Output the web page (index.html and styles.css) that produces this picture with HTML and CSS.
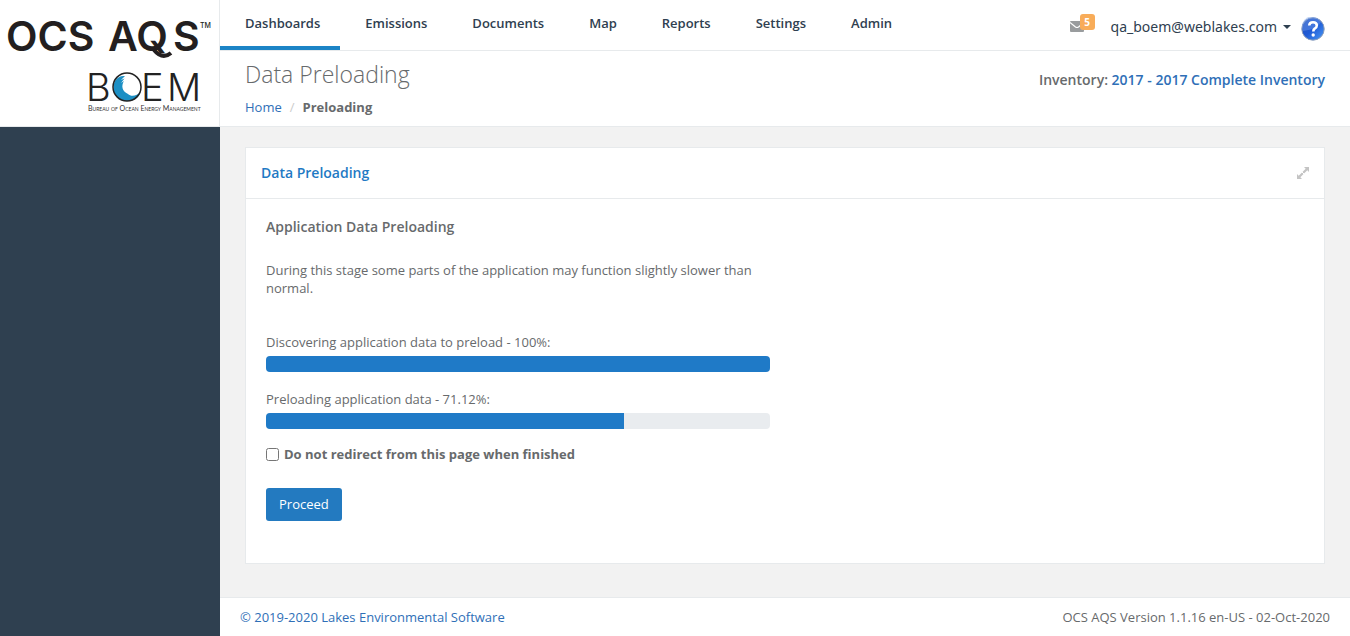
FILE: index.html
```html
<!DOCTYPE html>
<html lang="en">
<head>
<meta charset="utf-8">
<title>OCS AQS - Data Preloading</title>
<link rel="stylesheet" href="styles.css">
</head>
<body>
<div class="layout">
  <aside class="sidebar">
    <a class="brand" href="#" aria-label="OCS AQS home">
      <svg class="brand-logo" viewBox="0 0 219 126" role="img" aria-label="OCS AQS, BOEM">
        <g class="logo-title">
          <text x="6" y="51">OCS</text>
          <text x="108" y="51">AQ</text>
          <text x="173" y="51">S</text>
          <path d="M154 50C159 56 165 58 171 53" fill="none" stroke="#231f20" stroke-width="4"/>
        </g>
        <text class="logo-tm" x="200" y="28">TM</text>
        <g class="logo-boem">
          <text x="86" y="101">B</text>
          <text x="141" y="101">E</text>
          <text x="167" y="101">M</text>
        </g>
        <circle cx="127" cy="87" r="14" fill="#fff"/>
        <path fill="#1c8fc4" d="M125 76C117 75 113 82 113.500 89C114 96 120 101 127 101C134 101 139 98 140.500 92C137 96 131 97 128 94C122 91 121 86 124 81L121 83L124.500 78.500L121 80Z"/>
        <circle cx="127" cy="87" r="14" fill="none" stroke="#222" stroke-width="1.500"/>
        <text class="logo-sub" x="88" y="111">Bureau of Ocean Energy Management</text>
      </svg>
    </a>
  </aside>
  <div class="page">
    <header class="topbar">
      <nav class="nav" aria-label="Main">
        <a class="nav-link active" href="#">Dashboards</a>
        <a class="nav-link" href="#">Emissions</a>
        <a class="nav-link" href="#">Documents</a>
        <a class="nav-link" href="#">Map</a>
        <a class="nav-link" href="#">Reports</a>
        <a class="nav-link" href="#">Settings</a>
        <a class="nav-link" href="#">Admin</a>
      </nav>
      <div class="tools">
        <a class="mail" href="#" aria-label="5 messages">
          <svg width="14" height="11" viewBox="0 0 14 11" aria-hidden="true">
            <rect width="14" height="11" rx="1" fill="#999c9e"/>
            <path d="M0 1.500L5.500 6Q7 7 8.500 6L14 1.500" fill="none" stroke="#fff" stroke-width="1.200"/>
          </svg>
          <span class="badge">5</span>
        </a>
        <button class="user" type="button">qa_boem@weblakes.com<span class="caret"></span></button>
        <a class="help" href="#" aria-label="Help">
          <svg width="24" height="24" viewBox="0 0 24 24" aria-hidden="true">
            <defs>
              <linearGradient id="ball" x1="0" y1="0" x2="1" y2="1">
                <stop offset="0" stop-color="#2450b8"/>
                <stop offset=".5" stop-color="#1f5bd6"/>
                <stop offset="1" stop-color="#4d9cf5"/>
              </linearGradient>
            </defs>
            <circle cx="12" cy="12" r="11.200" fill="url(#ball)" stroke="#8f9fb8" stroke-width="1"/>
            <path d="M2 14A10 10 0 0 1 20 5Q17 12 2 14Z" fill="#6f9bea" opacity=".45"/>
            <path d="M8.200 8.500Q8.500 5.200 12 5.200Q15.800 5.200 15.800 8.500Q15.800 10.500 13.700 11.700Q12.300 12.600 12.300 14.500" fill="none" stroke="#fff" stroke-width="2.600"/>
            <circle cx="12.200" cy="18" r="1.700" fill="#fff"/>
          </svg>
        </a>
      </div>
    </header>
    <section class="heading">
      <div>
        <h1 class="title">Data Preloading</h1>
        <nav class="crumbs" aria-label="Breadcrumb">
          <a class="link" href="#">Home</a><span class="slash">/</span><strong>Preloading</strong>
        </nav>
      </div>
      <p class="inventory">Inventory: <a class="link" href="#">2017 - 2017 Complete Inventory</a></p>
    </section>
    <main class="content">
      <section class="panel">
        <header class="panel-head">
          <h2 class="panel-title">Data Preloading</h2>
          <button class="expand" type="button" aria-label="Expand">
            <svg width="12" height="12" viewBox="0 0 12 12" aria-hidden="true">
              <path d="M7 0H12V5L10.300 3.300L3.300 10.300L5 12H0V7L1.700 8.700L8.700 1.700Z" fill="#c4c4c4"/>
              <path d="M4.500 4.500L7.500 7.500" stroke="#fff" stroke-width="1"/>
            </svg>
          </button>
        </header>
        <div class="panel-body">
          <div class="column">
            <h3 class="subtitle">Application Data Preloading</h3>
            <p class="note">During this stage some parts of the application may function slightly slower than normal.</p>
            <div class="task">
              <div id="discover">Discovering application data to preload - 100%:</div>
              <div class="progress" role="progressbar" aria-labelledby="discover" aria-valuenow="100"><div class="bar" style="width:100%"></div></div>
            </div>
            <div class="task">
              <div id="preload">Preloading application data - 71.12%:</div>
              <div class="progress" role="progressbar" aria-labelledby="preload" aria-valuenow="71.12"><div class="bar" style="width:71.12%"></div></div>
            </div>
            <label class="check" for="stay"><input class="box" type="checkbox" id="stay">Do not redirect from this page when finished</label>
            <button class="proceed" type="button">Proceed</button>
          </div>
        </div>
      </section>
    </main>
    <footer class="footer">
      <a class="link" href="#">© 2019-2020 Lakes Environmental Software</a>
      <span>OCS AQS Version 1.1.16 en-US - 02-Oct-2020</span>
    </footer>
  </div>
</div>
</body>
</html>
```
FILE: styles.css
```css
* { box-sizing: border-box; }
body {
  margin: 0;
  font: 13px/18px "Open Sans", sans-serif;
  color: #676a6c;
  background: #2f4050;
}
a { text-decoration: none; }
h1, h2, h3, p { margin: 0; }
button { font-family: inherit; cursor: pointer; }
svg { display: block; }

.layout { display: flex; min-height: 100vh; }
.sidebar { flex: 0 0 220px; background: #2f4050; }
.brand {
  display: block;
  background: #fff;
  border-right: 1px solid #e7eaec;
  border-bottom: 1px solid #e7eaec;
}
.brand-logo { width: 100%; }
.logo-title { font: 600 41px Inter, sans-serif; fill: #231f20; }
.logo-tm { font: 500 7px Inter, sans-serif; fill: #231f20; }
.logo-boem { font: 300 38px Inter, sans-serif; fill: #222; }
.logo-sub { font: 7px Lato, sans-serif; font-variant: small-caps; fill: #333; }

.page {
  flex: 1;
  min-width: 0;
  display: flex;
  flex-direction: column;
  background: #f2f2f2;
}
.topbar {
  display: flex;
  justify-content: space-between;
  background: #fff;
  border-bottom: 1px solid #e7eaec;
}
.nav { display: flex; }
.nav-link {
  padding: 14px 20px 14px 25px;
  border-bottom: 4px solid transparent;
  font-weight: 600;
  color: #2f4050;
}
.active { border-color: #1c84c6; }
.tools { display: flex; align-items: center; padding: 3px 25px 0 0; }
.mail { position: relative; width: 25px; margin-right: 16px; }
.badge {
  position: absolute;
  top: -7px;
  right: 0;
  width: 15px;
  border-radius: 3px;
  background: #f8ac59;
  color: #fff;
  font-size: 10px;
  font-weight: 700;
  line-height: 16px;
  text-align: center;
}
.user {
  display: flex;
  align-items: center;
  gap: 6px;
  margin-right: 10px;
  padding: 0;
  border: 0;
  background: none;
  font-family: "Noto Sans", sans-serif;
  font-size: 14px;
  color: #2f4050;
}
.caret { border: 4px solid transparent; border-top-color: #2f4050; border-bottom: 0; }
.help { padding-top: 5px; }

.heading {
  display: flex;
  justify-content: space-between;
  padding: 8px 25px 10px;
  background: #fff;
  border-bottom: 1px solid #e7eaec;
}
.title { margin-bottom: 9px; font-size: 23px; font-weight: 300; line-height: 30px; }
.link { color: #2f6fb7; }
.slash { padding: 0 8px; color: #ccc; }
.inventory { padding-top: 12px; font-size: 14px; font-weight: 600; }

.content { flex: 1; padding: 20px 25px 33px; }
.panel { background: #fff; border: 1px solid #e7eaec; }
.panel-head {
  display: flex;
  align-items: center;
  justify-content: space-between;
  padding: 15px 15px;
  border-bottom: 1px solid #e7eaec;
}
.panel-title { font-size: 14px; font-weight: 600; line-height: 20px; color: #1f7ac4; }
.expand { padding: 0; border: 0; background: none; }
.panel-body { padding: 18px 20px 42px; }
.column { width: 50%; padding-right: 15px; }
.subtitle { margin-bottom: 24px; font-size: 14px; font-weight: 600; line-height: 20px; }
.note { margin-bottom: 36px; }
.task { margin-bottom: 18px; }
.progress {
  height: 16px;
  margin-top: 5px;
  border-radius: 4px;
  background: #e9ecef;
  overflow: hidden;
}
.bar { height: 100%; background: #1f7ac7; }
.check { display: flex; align-items: center; gap: 5px; margin-top: -2px; font-weight: 700; }
.box { width: 13px; height: 13px; margin: 0; }
.proceed {
  margin-top: 25px;
  padding: 7px 13px;
  border: 0;
  border-radius: 3px;
  background: #237ac0;
  color: #fff;
  font-size: 13px;
  line-height: 19px;
}
.footer {
  display: flex;
  justify-content: space-between;
  padding: 10px 20px;
  background: #fff;
  border-top: 1px solid #e7eaec;
}
```
